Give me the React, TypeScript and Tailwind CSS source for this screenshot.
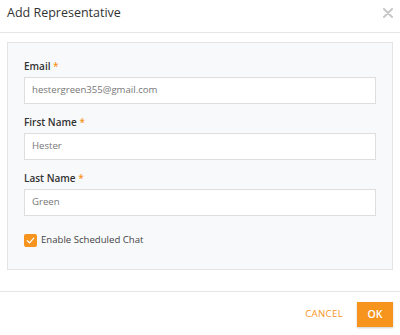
import React from "react";

function Field({ label, value }: { label: string; value: string }) {
  return (
    <div className="flex flex-col">
      <div className="h-[16px] leading-[16px] text-[10px] font-semibold text-[#333]">
        {label} <span className="text-[#f7941d]">*</span>
      </div>
      <div className="mt-[3px] h-[27px] border border-[#dedede] bg-white px-[7px] flex items-center text-[9.6px] text-[#777]">
        {value}
      </div>
    </div>
  );
}

export default function App() {
  return (
    <div
      className="w-[400px] h-[335px] bg-white flex flex-col"
      style={{ fontFamily: '"Open Sans", "Noto Sans", sans-serif' }}
    >
      <div className="h-[33px] flex items-center justify-between pl-[7px] pr-[7px] pb-[6px] border-b border-[#e6e6e6]">
        <div className="text-[12.5px] text-[#333] leading-none">Add Representative</div>
        <svg width="10" height="10" viewBox="0 0 10 10">
          <path d="M1 1L9 9M9 1L1 9" stroke="#c8c8c8" strokeWidth="2" strokeLinecap="round" />
        </svg>
      </div>
      <div className="px-[7px] pt-[9px]">
        <div className="h-[228px] border border-[#e4e4e4] bg-[#f8f9fb] pt-[15px] px-[16px] flex flex-col gap-[10px]">
          <Field label="Email" value="hestergreen355@gmail.com" />
          <Field label="First Name" value="Hester" />
          <Field label="Last Name" value="Green" />
          <div className="mt-[7px] flex items-center gap-[4px]">
            <div className="w-[13px] h-[13px] rounded-[2px] bg-[#f7941d] flex items-center justify-center">
              <svg width="9" height="9" viewBox="0 0 10 10">
                <path d="M1.5 5.2L4 7.6L8.6 2.4" stroke="white" strokeWidth="1.4" fill="none" strokeLinecap="round" strokeLinejoin="round" />
              </svg>
            </div>
            <div className="text-[9.6px] text-[#444]">Enable Scheduled Chat</div>
          </div>
        </div>
      </div>
      <div className="mt-[21px] border-t border-[#e6e6e6] flex items-center justify-end gap-[14px] pr-[7px] pt-[10px]">
        <div className="text-[9.7px] text-[#f7941d] tracking-[0.3px]">CANCEL</div>
        <div className="w-[36px] h-[25px] bg-[#f7941d] text-white text-[10.5px] font-semibold flex items-center justify-center shadow-[0_1px_2px_rgba(0,0,0,0.2)]">
          OK
        </div>
      </div>
    </div>
  );
}
